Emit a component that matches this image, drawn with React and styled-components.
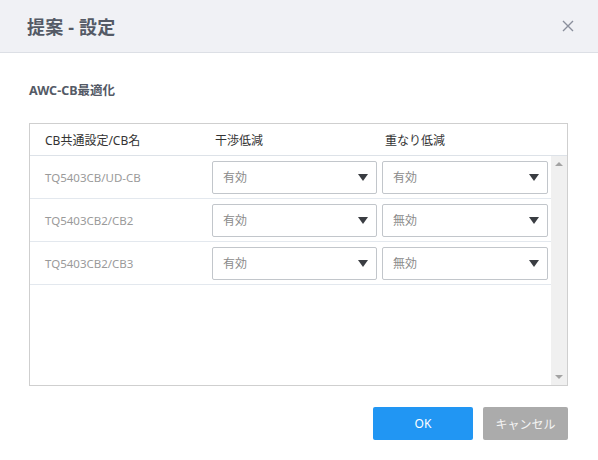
import React from "react";
import styled, { createGlobalStyle } from "styled-components";

const GlobalStyle = createGlobalStyle`
  html, body { margin: 0; padding: 0; background: #fff; }
  body { font-family: "Noto Sans", "Noto Sans CJK JP", sans-serif; }
  * { box-sizing: border-box; }
`;

const Dialog = styled.div`
  width: 598px;
  height: 460px;
  background: #fff;
  display: flex;
  flex-direction: column;
`;

const Header = styled.div`
  height: 53px;
  flex: none;
  background: #f0f1f5;
  border-bottom: 1px solid #dcdfe5;
  display: flex;
  align-items: center;
  justify-content: space-between;
  padding: 0 24px 0 27px;
`;

const Title = styled.div`
  font-size: 18px;
  font-weight: 700;
  color: #545a66;
  letter-spacing: 0.2px;
`;

const CloseButton = styled.button`
  border: none;
  background: none;
  padding: 0;
  width: 12px;
  height: 12px;
  display: flex;
  cursor: pointer;
`;

const Body = styled.div`
  padding: 29px 30px 0 29px;
  display: flex;
  flex-direction: column;
`;

const SectionLabel = styled.div`
  font-size: 12.5px;
  font-weight: 700;
  color: #545a66;
  line-height: 18px;
`;

const Table = styled.div`
  margin-top: 23px;
  border: 1px solid #cfcfcf;
  height: 263px;
  display: flex;
  flex-direction: column;
`;

const HeaderRow = styled.div`
  height: 32px;
  flex: none;
  border-bottom: 1px solid #dde2e8;
  display: grid;
  grid-template-columns: 170px 170px 1fr;
  align-items: center;
  font-size: 12px;
  color: #333;
  padding-left: 15px;
`;

const BodyArea = styled.div`
  flex: 1;
  display: flex;
  min-height: 0;
`;

const Rows = styled.div`
  flex: 1;
  min-width: 0;
  display: flex;
  flex-direction: column;
`;

const Row = styled.div`
  height: 43px;
  border-bottom: 1px solid #e3e8ee;
  display: grid;
  grid-template-columns: 162px 165px 166px;
  column-gap: 5px;
  align-items: center;
  padding-left: 15px;
`;

const NameCell = styled.div`
  font-size: 11.5px;
  color: #9a9a9a;
  white-space: nowrap;
`;

const Select = styled.div`
  height: 33px;
  border: 1px solid #c2c6cb;
  border-radius: 2px;
  display: flex;
  align-items: center;
  justify-content: space-between;
  padding: 0 8px 0 10px;
  font-size: 12px;
  color: #8a8a8a;
  background: #fff;
`;

const Arrow = styled.span`
  width: 0;
  height: 0;
  border-left: 5.5px solid transparent;
  border-right: 5.5px solid transparent;
  border-top: 7px solid #3a3d42;
`;

const Scrollbar = styled.div`
  width: 16px;
  flex: none;
  background: #f0f0f0;
  display: flex;
  flex-direction: column;
  justify-content: space-between;
  align-items: center;
  padding: 6px 0 6px;
`;

const ScrollArrow = styled.span`
  width: 0;
  height: 0;
  border-left: 4px solid transparent;
  border-right: 4px solid transparent;
  ${(p) =>
    p.$up
      ? "border-bottom: 4px solid #a3a3a3;"
      : "border-top: 4px solid #a3a3a3;"}
`;

const Footer = styled.div`
  margin-top: 21px;
  display: flex;
  justify-content: flex-end;
  gap: 10px;
`;

const Button = styled.button`
  height: 33px;
  width: ${(p) => p.$w}px;
  border: none;
  border-radius: 2px;
  background: ${(p) => p.$bg};
  color: ${(p) => p.$fg};
  font-family: "Noto Sans", "Noto Sans CJK JP", sans-serif;
  font-size: 12px;
  padding: 0;
  cursor: pointer;
`;

const rows = [
  { name: "TQ5403CB/UD-CB", a: "有効", b: "有効" },
  { name: "TQ5403CB2/CB2", a: "有効", b: "無効" },
  { name: "TQ5403CB2/CB3", a: "有効", b: "無効" },
];

export default function App() {
  return (
    <>
      <GlobalStyle />
      <Dialog>
        <Header>
          <Title>提案 - 設定</Title>
          <CloseButton aria-label="close">
            <svg width="12" height="12" viewBox="0 0 12 12">
              <path d="M1 1L11 11M11 1L1 11" stroke="#8a8f9c" strokeWidth="1.4" />
            </svg>
          </CloseButton>
        </Header>
        <Body>
          <SectionLabel>AWC-CB最適化</SectionLabel>
          <Table>
            <HeaderRow>
              <span>CB共通設定/CB名</span>
              <span>干渉低減</span>
              <span>重なり低減</span>
            </HeaderRow>
            <BodyArea>
              <Rows>
                {rows.map((r) => (
                  <Row key={r.name}>
                    <NameCell>{r.name}</NameCell>
                    <Select>
                      <span>{r.a}</span>
                      <Arrow />
                    </Select>
                    <Select>
                      <span>{r.b}</span>
                      <Arrow />
                    </Select>
                  </Row>
                ))}
              </Rows>
              <Scrollbar>
                <ScrollArrow $up />
                <ScrollArrow />
              </Scrollbar>
            </BodyArea>
          </Table>
          <Footer>
            <Button $w={100} $bg="#2196f3" $fg="#fff">OK</Button>
            <Button $w={85} $bg="#ababab" $fg="#f4f4f4">キャンセル</Button>
          </Footer>
        </Body>
      </Dialog>
    </>
  );
}
